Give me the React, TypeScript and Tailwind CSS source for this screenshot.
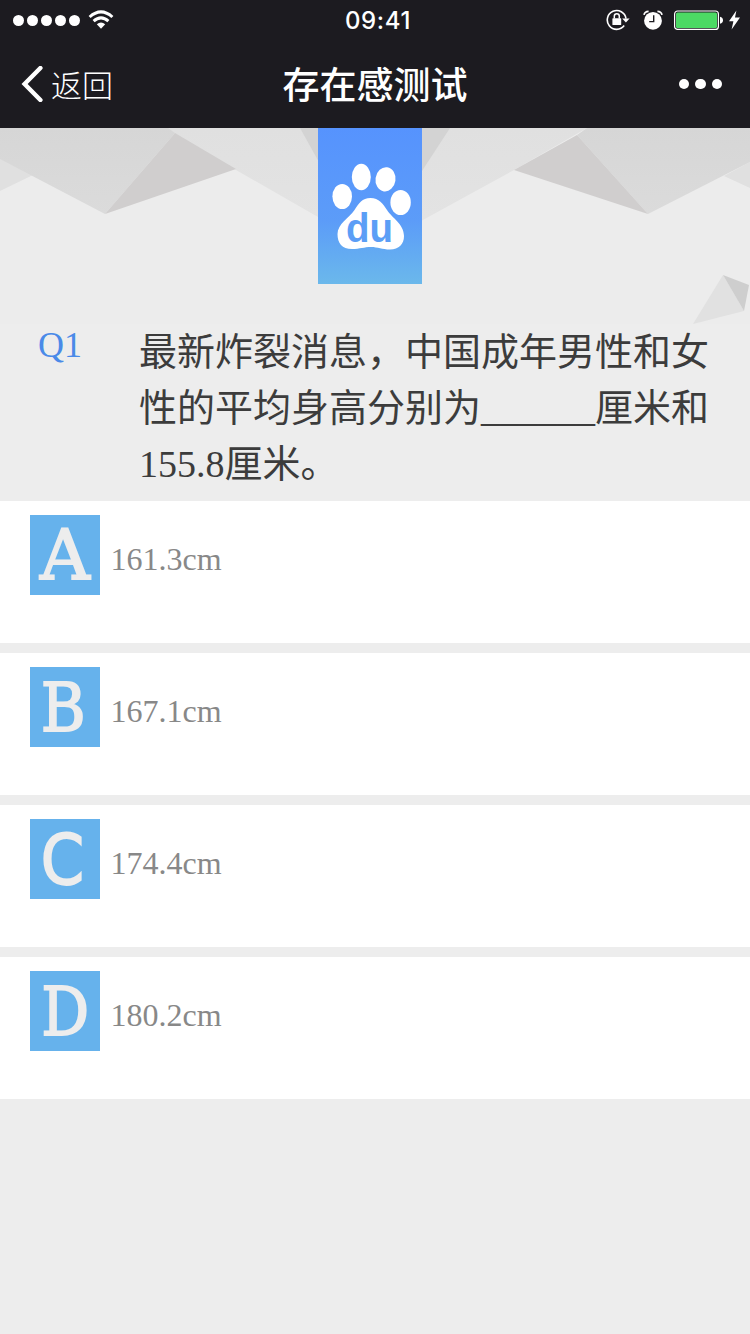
import React from 'react';

interface Option {
    label: string;
    text: string;
    labelClass: string;
}

const options: Option[] = [
    { label: 'A', text: '161.3cm', labelClass: "font-['DejaVu_Serif',serif] text-[69px]" },
    { label: 'B', text: '167.1cm', labelClass: "pt-0.5 pr-1 font-['DejaVu_Serif',serif] text-[68px] scale-x-90" },
    { label: 'C', text: '174.4cm', labelClass: "pt-0.5 pr-1.5 font-['DejaVu_Sans',sans-serif] text-[69px] scale-x-90" },
    { label: 'D', text: '180.2cm', labelClass: "pt-0.5 font-['DejaVu_Serif',serif] text-[68px] scale-x-88" },
];

const WifiIcon = () => (
    <svg width="26" height="20" viewBox="0 0 26 20" fill="none" stroke="#fff" strokeWidth="3">
        <path d="M1.6 7 Q13 -3.2 24.4 7" />
        <path d="M5.6 11.2 Q13 4.6 20.4 11.2" />
        <path d="M8.8 14.3 Q13 10.6 17.2 14.3 L13 18.8 Z" fill="#fff" stroke="none" />
    </svg>
);

const RotationLockIcon = () => (
    <svg width="24" height="22" viewBox="0 0 24 22" fill="none">
        <path d="M18.2 16.6 A9.4 9.4 0 1 1 20 9.6" stroke="#fff" strokeWidth="1.6" />
        <path d="M16.2 9.4 H23.6 L19.9 13.4 Z" fill="#fff" />
        <rect x="6.4" y="9.3" width="8.8" height="6.8" rx="0.6" fill="#fff" />
        <path d="M8.3 9.5 V7.3 a2.5 2.5 0 0 1 5 0 V9.5" stroke="#fff" strokeWidth="1.5" />
    </svg>
);

const AlarmIcon = () => (
    <svg width="20" height="20" viewBox="0 0 20 20" fill="none">
        <circle cx="10" cy="10.8" r="8.9" fill="#fff" />
        <path d="M1 4.8 Q1.6 1.6 5.6 1.4" stroke="#fff" strokeWidth="1.7" />
        <path d="M19 4.8 Q18.4 1.6 14.4 1.4" stroke="#fff" strokeWidth="1.7" />
        <path d="M10.7 5.2 V11.6 H6.2" stroke="#1c1b20" strokeWidth="1.4" />
    </svg>
);

const BatteryIcon = () => (
    <svg width="50" height="20" viewBox="0 0 50 20" fill="none">
        <rect x="0.6" y="1" width="43.8" height="18.4" rx="3" stroke="#fff" strokeWidth="1.2" />
        <rect x="2" y="2.4" width="41" height="15.6" rx="1.5" fill="#4cd964" />
        <path d="M46 6.8 Q49 7.4 49 10.2 Q49 13 46 13.8 Z" fill="#fff" />
    </svg>
);

const BoltIcon = () => (
    <svg width="11" height="20" viewBox="0 0 11 20">
        <path d="M7.4 0.4 L0 11.2 H4.4 L2.6 19.4 L11 7.6 H6 Z" fill="#fff" />
    </svg>
);

const StatusBar = () => (
    <div className="grid h-10 grid-cols-3 items-center">
        <div className="flex items-center pl-[13px]">
            <div className="flex gap-[3px]">
                {[0, 1, 2, 3, 4].map((dot) => (
                    <span key={dot} className="size-[11px] rounded-full bg-white" />
                ))}
            </div>
            <div className="ml-2">
                <WifiIcon />
            </div>
        </div>
        <div className="h-10 pl-1.5 text-center font-['Inter',sans-serif] text-[24px] leading-[41px] font-medium tracking-[0.6px]">
            09:41
        </div>
        <div className="flex items-center justify-end pr-[10px]">
            <RotationLockIcon />
            <div className="ml-[13px]">
                <AlarmIcon />
            </div>
            <div className="ml-[11px]">
                <BatteryIcon />
            </div>
            <div className="ml-[5px] shrink-0">
                <BoltIcon />
            </div>
        </div>
    </div>
);

const NavBar = () => (
    <div className="grid h-[88px] grid-cols-3 items-center">
        <button className="flex items-center pl-[21px] text-left">
            <svg width="22" height="36" viewBox="0 0 22 36" fill="none" stroke="#fff" strokeWidth="4.4">
                <path d="M19.4 2 L3.6 18 L19.4 34" strokeLinecap="round" />
            </svg>
            <span className="ml-2 pb-px text-[31px] leading-none font-light">返回</span>
        </button>
        <h1 className="pb-px text-center text-[37px] leading-none font-medium whitespace-nowrap">存在感测试</h1>
        <div className="flex justify-end gap-[6px] pr-7">
            <span className="size-[10.5px] rounded-full bg-white" />
            <span className="size-[10.5px] rounded-full bg-white" />
            <span className="size-[10.5px] rounded-full bg-white" />
        </div>
    </div>
);

const Backdrop = () => (
    <svg className="absolute inset-0" width="750" height="196" viewBox="0 0 750 196">
        <defs>
            <linearGradient id="slab" x1="0" y1="0" x2="0" y2="1">
                <stop offset="0" stopColor="#d6d6d6" />
                <stop offset="1" stopColor="#dbdbdb" />
            </linearGradient>
            <linearGradient id="wing" x1="0" y1="0" x2="0" y2="1">
                <stop offset="0" stopColor="#e0e0e0" />
                <stop offset="1" stopColor="#e4e4e4" />
            </linearGradient>
        </defs>
        <rect width="750" height="196" fill="#ececec" />
        <path d="M165 0 H587 L514 42 L421 93 L370 120 L318 89 L236 42 Z" fill="url(#wing)" />
        <path d="M300 0 H450 L420 46 L390 90 H350 Z" fill="#d3d3d3" />
        <path d="M0 30 L33 47 L0 63 Z" fill="#e0e0e0" />
        <path d="M0 0 H168 L175 5 L105 86 L0 31 Z" fill="url(#slab)" />
        <path d="M175 5 L236 41 L105 86 Z" fill="#d0cece" />
        <path d="M750 34 L724 48 L750 60 Z" fill="#e0e0e0" />
        <path d="M587 0 H750 V34 L648 86 L577 7 Z" fill="url(#slab)" />
        <path d="M577 7 L514 42 L648 86 Z" fill="#d0cece" />
        <path d="M723 147 L744 183 L693 196 Z" fill="#e1e1e1" />
        <path d="M723 147 L749 157 L744 183 Z" fill="#cecece" />
    </svg>
);

const BrandFlag = () => (
    <div className="relative ml-[318px] h-39 w-26 bg-linear-to-b from-[#5693fe] via-[#5c9cf8] via-60% to-[#6bb8eb]">
        <svg width="104" height="156" viewBox="0 0 104 156">
            <g fill="#fff">
                <ellipse cx="24.2" cy="68.5" rx="9.8" ry="12.6" />
                <ellipse cx="43.3" cy="49" rx="9.5" ry="13.2" />
                <ellipse cx="67.5" cy="51.3" rx="10" ry="12.2" transform="rotate(8 67.5 51.3)" />
                <ellipse cx="82.6" cy="74.5" rx="10.2" ry="12.6" />
                <path d="M52.5 70 C61 70 65 76 69 82 C74 90 86 96 86 108 C86 116 81 121.5 72 121.5 C64 121.5 60 119 53 119 C46 119 42 121 34 121 C24 121 19.5 115 19.5 106 C19.5 96 31 90 36.5 82 C41 75 44 70 52.5 70 Z" />
            </g>
            <text
                x="28"
                y="113.5"
                textLength="47"
                lengthAdjust="spacingAndGlyphs"
                className="fill-[#5b9ef6] font-['Liberation_Sans',sans-serif] text-[40px] font-bold"
            >
                du
            </text>
        </svg>
    </div>
);

const OptionRow = ({ option }: { option: Option }) => (
    <button className="flex h-[142px] w-full items-start bg-white pt-[14px] pl-[30px] text-left">
        <span className="flex h-20 w-[70px] items-center justify-center bg-[#66b2ec] text-[#ededed]">
            <span className={`leading-[80px] [-webkit-text-stroke:1.8px_#ededed] ${option.labelClass}`}>
                {option.label}
            </span>
        </span>
        <span className="ml-[10.5px] pt-[2px] text-[32px] leading-[84px] text-[#888]">{option.text}</span>
    </button>
);

const App: React.FC = () => {
    return (
        <div className="min-h-[1334px] w-[750px] bg-[#ededed] font-['Liberation_Serif','Noto_Sans_CJK_SC',serif]">
            <header className="h-32 bg-[#1c1b20] font-['Noto_Sans_CJK_SC',sans-serif] text-white">
                <StatusBar />
                <NavBar />
            </header>

            <main>
                {/* Banner */}
                <div className="relative h-[196px]">
                    <Backdrop />
                    <BrandFlag />
                </div>

                {/* Question */}
                <section className="flex h-[177px] text-[38px] text-[#3c3c3c]">
                    <span className="w-[102px] shrink-0 pl-[38px] text-[36px] leading-[43px] text-[#4a8ae8]">Q1</span>
                    <p className="ml-[37px] w-[572px] leading-[56px] break-all">
                        最新炸裂消息，中国成年男性和女性的平均身高分别为______厘米和155.8厘米。
                    </p>
                </section>

                <div className="flex flex-col gap-[10px]">
                    {options.map((option) => (
                        <OptionRow key={option.label} option={option} />
                    ))}
                </div>
            </main>
        </div>
    );
};

export default App;
